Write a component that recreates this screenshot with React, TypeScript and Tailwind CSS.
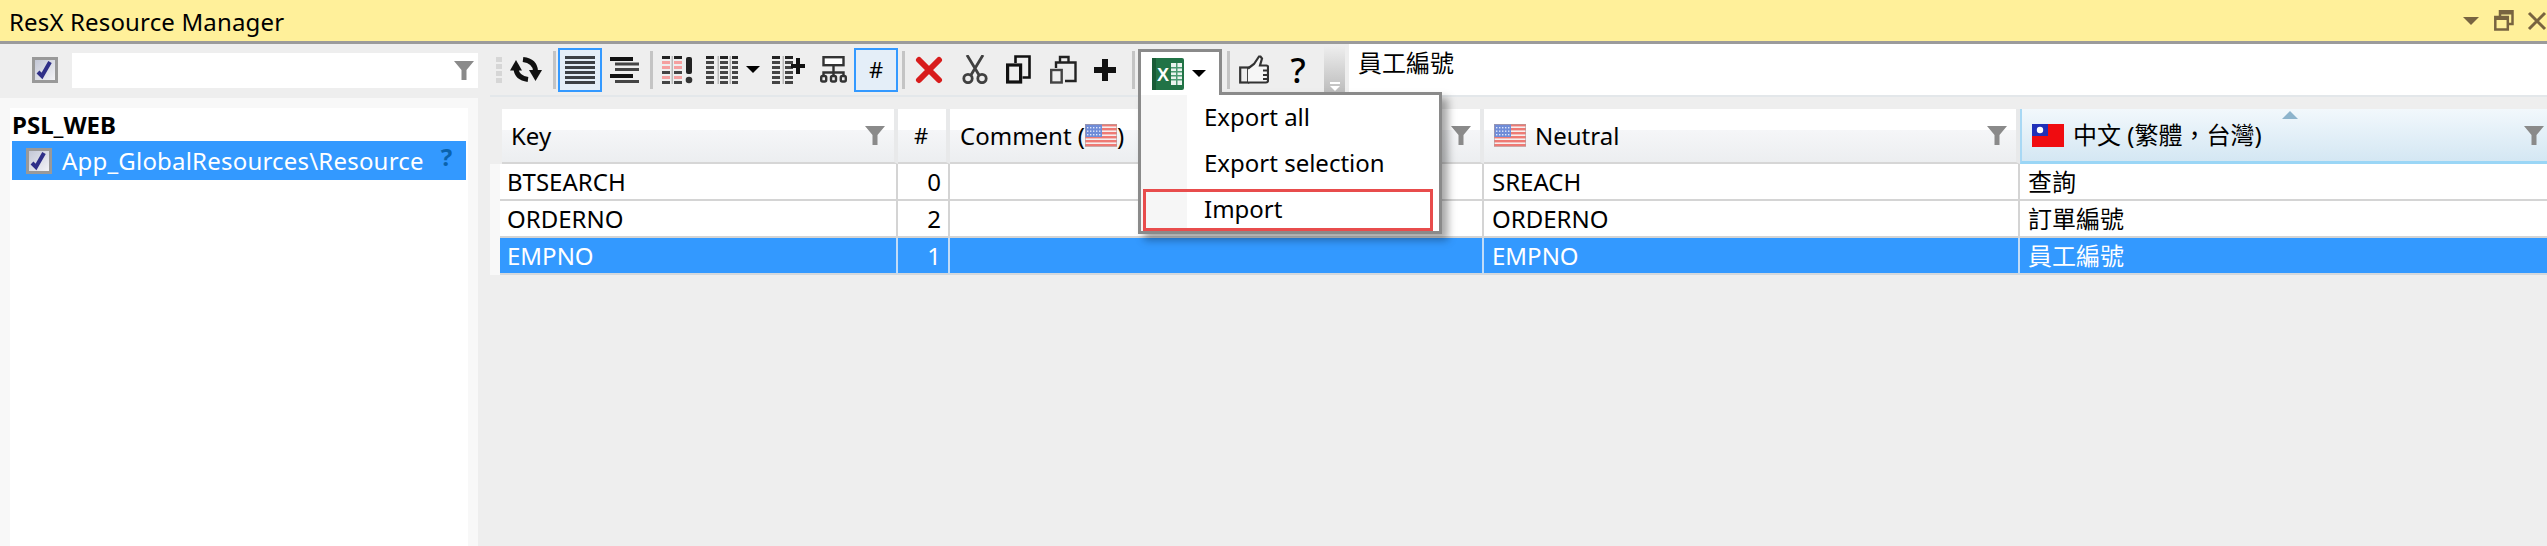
const ui = { fontFamily: '"Noto Sans", "Noto Sans CJK TC", sans-serif' };

function FilterIcon() {
  return (
    <svg width="20" height="19" viewBox="0 0 20 19" className="shrink-0">
      <path d="M0 0h20L12.5 9v10h-5V9z" fill="#8a8a8a" />
    </svg>
  );
}

function CheckBox() {
  return (
    <div className="w-[26px] h-[26px] shrink-0 border-[3px] border-[#999999] bg-gradient-to-br from-[#c3c7d6] to-[#f3f3f6]">
      <svg width="20" height="20" viewBox="0 0 20 20">
        <path d="M3 12l4 4 8-14" fill="none" stroke="#2f2f88" strokeWidth="4" />
      </svg>
    </div>
  );
}

function UsFlag() {
  return (
    <svg width="32" height="23" viewBox="0 0 32 23" className="shrink-0">
      <rect width="32" height="23" fill="#f6eeee" />
      {[0, 4, 8, 12, 16, 20].map((y) => (
        <rect key={y} y={y} width="32" height="2.4" fill="#ee7a74" />
      ))}
      <rect width="17" height="13" fill="#6f8cd8" />
      {[2, 5, 8, 11, 14].map((x) =>
        [3, 6.5, 10].map((y) => <rect key={`${x}-${y}`} x={x} y={y} width="1.4" height="1.4" fill="#dfe6fa" />),
      )}
      <rect x="0.5" y="0.5" width="31" height="22" fill="none" stroke="#b09a9a" strokeWidth="1" opacity="0.6" />
    </svg>
  );
}

function TwFlag() {
  return (
    <svg width="32" height="23" viewBox="0 0 32 23" className="shrink-0">
      <rect width="32" height="23" fill="#f00c10" />
      <rect width="16" height="12" fill="#2030b8" />
      <circle cx="8" cy="6" r="3.2" fill="#ffffff" />
    </svg>
  );
}

function Justify() {
  return (
    <svg width="30" height="28" viewBox="0 0 30 28">
      {[0, 5, 10, 15, 20, 25].map((y) => (
        <rect key={y} y={y} width="30" height="3" fill="#3c4046" />
      ))}
    </svg>
  );
}

function Centered() {
  const lines = [
    [0, 1, 23, '#111111', 4],
    [5, 6.5, 24, '#444444', 3],
    [5, 12, 24, '#444444', 3],
    [0, 18, 23, '#111111', 4],
    [5, 24, 24, '#444444', 3],
  ] as const;
  return (
    <svg width="30" height="28" viewBox="0 0 30 28">
      {lines.map(([x, y, w, fill, h], i) => (
        <rect key={i} x={x} y={y} width={w} height={h} fill={fill} />
      ))}
    </svg>
  );
}

function Stripes({ cols, pink }: { cols: number[]; pink?: boolean }) {
  const ys = [0, 5, 10, 15, 20, 25];
  return (
    <>
      {cols.map((x, c) =>
        ys.map((y, i) => (
          <rect
            key={`${c}-${i}`}
            x={x}
            y={y}
            width="8"
            height="3"
            fill={pink && (i === 1 || i === 2 || i === 4) ? '#f5a0a0' : i === 0 ? '#222222' : '#444444'}
          />
        )),
      )}
      {cols.slice(1).map((x) => (
        <rect key={x} x={x - 2.5} y="0" width="1.5" height="28" fill="#b8b8b8" />
      ))}
    </>
  );
}

function Refresh() {
  return (
    <svg width="32" height="26" viewBox="0 0 32 26">
      <path d="M6 12Q7 21 18 22.5" fill="none" stroke="#111111" strokeWidth="5" />
      <path d="M6 3L0 13.5h12z" fill="#111111" />
      <path d="M25.5 14Q25 4 13 2.5" fill="none" stroke="#111111" strokeWidth="5" />
      <path d="M25.5 24L19 13h13z" fill="#111111" />
    </svg>
  );
}

function Tree() {
  return (
    <svg width="27" height="27" viewBox="0 0 27 27" fill="none" stroke="#333333" strokeWidth="2.4">
      <rect x="3.5" y="1.2" width="20" height="8" fill="#ffffff" />
      <path d="M13.5 9v10M3.5 20v-3.5h20V20" />
      <rect x="1.2" y="20" width="5" height="5.5" rx="1.5" />
      <rect x="11" y="20" width="5" height="5.5" rx="1.5" />
      <rect x="20.8" y="20" width="5" height="5.5" rx="1.5" />
    </svg>
  );
}

function Scissors() {
  return (
    <svg width="26" height="29" viewBox="0 0 26 29" fill="none" stroke="#404040" strokeWidth="2.8">
      <path d="M5 0l12 20M21 0L9 20" />
      <circle cx="6" cy="23.5" r="4.2" />
      <circle cx="20" cy="23.5" r="4.2" />
    </svg>
  );
}

function Copy() {
  return (
    <svg width="25" height="29" viewBox="0 0 25 29" fill="none" stroke="#111111">
      <rect x="1.6" y="10" width="13" height="17" strokeWidth="3.2" />
      <path d="M9.5 8V1.5h14v21h-7" strokeWidth="2.6" />
    </svg>
  );
}

function Paste() {
  return (
    <svg width="27" height="29" viewBox="0 0 27 29" fill="none" stroke="#222222" strokeWidth="2.4">
      <rect x="1.2" y="15" width="10.5" height="12.5" stroke="#444444" />
      <path d="M6 13V7.5h19.5v18.5H15M10 7V2h8.5v5.5" />
    </svg>
  );
}

function Thumb() {
  return (
    <svg width="30" height="29" viewBox="0 0 30 29" fill="none" stroke="#333333" strokeWidth="2.2" className="ml-[9px]">
      <rect x="1.2" y="12.5" width="8" height="15" />
      <path d="M9 13.5L15 9L20 1.5h1.5L23 3.5L21 10.5H27.5Q29 10.5 29 12V25.5Q29 27.5 27 27.5H9" fill="#f6f6f6" />
      <path d="M24 15.5h5M24 20h5M24 24h5" strokeWidth="1.8" />
    </svg>
  );
}

function Excel() {
  return (
    <svg width="32" height="32" viewBox="0 0 32 32">
      <rect width="32" height="32" rx="2" fill="#217346" />
      <rect x="19" y="5" width="11" height="22" fill="#eaf3ee" />
      {[9, 13, 17, 21].map((y) => (
        <rect key={y} x="19" y={y} width="11" height="1.5" fill="#4c9a72" />
      ))}
      <rect x="24" y="5" width="1.5" height="22" fill="#4c9a72" />
      <rect y="0" width="4" height="32" fill="#185c37" />
      <text x="5" y="23" fill="#ffffff" fontSize="18" fontWeight="700" style={{ fontFamily: '"Liberation Sans", sans-serif' }}>
        X
      </text>
    </svg>
  );
}

function Sep() {
  return <div className="w-[3px] h-[38px] bg-[#c4c4c4] shrink-0" />;
}

function DropArrow() {
  return <div className="w-0 h-0 border-x-[7px] border-x-transparent border-t-[7px] border-t-black" />;
}

const headerColumns = 'grid grid-cols-[12px_396px_52px_534px_536px_1fr]';
const columns = 'grid grid-cols-[10px_398px_52px_534px_536px_1fr]';
const headerFill = 'bg-gradient-to-b from-white from-40% via-[#f5f6f8] via-40% to-[#eceef0]';

const rows = [
  { key: 'BTSEARCH', n: '0', neutral: 'SREACH', zh: '查詢' },
  { key: 'ORDERNO', n: '2', neutral: 'ORDERNO', zh: '訂單編號' },
  { key: 'EMPNO', n: '1', neutral: 'EMPNO', zh: '員工編號', selected: true },
];

function HeaderCell({ children, active }: { children: React.ReactNode; active?: boolean }) {
  return (
    <div
      className={
        active
          ? 'relative h-[55px] flex items-center pl-[10px] pr-[3px] border-l-2 border-b-[3px] border-l-[#a8d8f4] border-b-[#9ad6f6] bg-gradient-to-b from-[#f2f8fc] to-[#d4e7f3]'
          : `h-[55px] flex items-center pl-[9px] pr-[9px] border-r-[4px] border-b-2 border-r-[#e8e9ea] border-b-[#d6d6d6] ${headerFill}`
      }
    >
      {children}
      <div className="flex-1" />
      <FilterIcon />
    </div>
  );
}

export default function App() {
  return (
    <div className="w-[2547px] h-[546px] flex flex-col overflow-hidden bg-[#eeeeee] text-[24px] text-black" style={ui}>
      {/* Title bar */}
      <div className="h-[44px] shrink-0 flex items-center pl-[9px] bg-[#fff09a] border-b-[3px] border-[#9b9b9b]">
        <span className="pt-[2px] tracking-[0.15px]">ResX Resource Manager</span>
        <div className="flex-1" />
        <div className="w-0 h-0 border-x-[8px] border-x-transparent border-t-[8px] border-t-[#786440]" />
        <svg width="20" height="21" viewBox="0 0 20 21" fill="none" stroke="#786440" strokeWidth="2.5" className="ml-[15px]">
          <rect x="1.3" y="7" width="12.5" height="12.5" />
          <path d="M6 6V1.3h12.5V14H14" />
          <path d="M1.3 8.5h12.5M6 3h12.5" strokeWidth="3" />
        </svg>
        <svg width="20" height="20" viewBox="0 0 20 20" stroke="#786440" strokeWidth="3" className="ml-[13px]">
          <path d="M2 2l16 16M18 2L2 18" />
        </svg>
      </div>

      <div className="flex-1 flex min-h-0">
        {/* Left panel */}
        <div className="w-[478px] shrink-0 flex flex-col">
          <div className="h-[54px] shrink-0 flex items-center pl-[32px] pb-[2px]">
            <CheckBox />
            <div className="ml-[14px] flex-1 h-[35px] bg-white flex items-center justify-end pr-[4px]">
              <FilterIcon />
            </div>
          </div>
          <div className="flex-1 bg-[#f8f8f8] pt-[10px] pl-[10px] pr-[10px]">
            <div className="h-full bg-white pl-[2px] pr-[2px]">
              <div className="h-[33px] font-bold leading-[33px]">PSL_WEB</div>
              <div className="h-[39px] flex items-center pl-[14px] bg-[#3399ff] text-white">
                <CheckBox />
                <span className="ml-[10px] tracking-[0.2px]">App_GlobalResources\Resource</span>
                <span className="ml-[17px] mb-[8px] font-bold text-[#0a63ad]">?</span>
              </div>
            </div>
          </div>
        </div>

        {/* Right panel */}
        <div className="w-[12px] shrink-0" />
        <div className="flex-1 min-w-0 flex flex-col relative">
          <div className="h-[53px] shrink-0 flex border-b-2 border-[#e3e7ea]">
            <div className="w-[859px] shrink-0 flex items-center pl-[6px]">
              <div className="w-[6px] shrink-0 flex flex-col gap-[2px]">
                {[0, 1, 2, 3].map((i) => (
                  <div key={i} className="w-[6px] h-[5px] bg-[#d6d6d6]" />
                ))}
              </div>
              <div className="ml-[8px]"><Refresh /></div>
              <div className="ml-[11px]"><Sep /></div>
              <div className="ml-[2px] w-[44px] h-[44px] flex items-center justify-center border-2 border-[#3399ff] bg-[#e4eef8]"><Justify /></div>
              <div className="ml-[8px]"><Centered /></div>
              <div className="ml-[10px]"><Sep /></div>
              <svg width="31" height="28" viewBox="0 0 31 28" className="ml-[9px]">
                <Stripes cols={[0, 12]} pink />
                <rect x="24" y="1" width="6" height="17" rx="2" fill="#222222" />
                <circle cx="27" cy="24" r="3.3" fill="#333333" />
              </svg>
              <svg width="32" height="28" viewBox="0 0 32 28" className="ml-[13px]"><Stripes cols={[0, 14, 26]} /></svg>
              <div className="ml-[8px]"><DropArrow /></div>
              <svg width="33" height="28" viewBox="0 0 33 28" className="ml-[12px]">
                <Stripes cols={[0, 13]} />
                <path d="M24 2h4v6h5v4h-5v6h-4v-6h-5V8h5z" fill="#111111" />
              </svg>
              <div className="ml-[15px]"><Tree /></div>
              <div className="ml-[7px] w-[44px] h-[44px] flex items-center justify-center border-2 border-[#3399ff] bg-[#e4eef8] text-[22px]">#</div>
              <div className="ml-[4px]"><Sep /></div>
              <svg width="28" height="28" viewBox="0 0 28 28" className="ml-[10px]" stroke="#d81c1c" strokeWidth="6" strokeLinecap="round">
                <path d="M4 4l20 20M24 4L4 24" />
              </svg>
              <div className="ml-[19px]"><Scissors /></div>
              <div className="ml-[18px]"><Copy /></div>
              <div className="ml-[19px]"><Paste /></div>
              <svg width="22" height="22" viewBox="0 0 22 22" className="ml-[17px]"><path d="M8 0h6v8h8v6h-8v8H8v-8H0V8h8z" fill="#111111" /></svg>
              <div className="ml-[16px]"><Sep /></div>
              {/* room for the open Excel button, drawn over the toolbar below */}
              <div className="w-[92px] h-[44px] shrink-0" />
              <Sep />
              <Thumb />
              <span className="ml-[21px] w-[16px] text-center text-[34px] font-medium leading-none">?</span>
              <div className="ml-[18px] w-[21px] self-stretch mt-[2px] mb-[3px] bg-gradient-to-b from-[#eeeeee] to-[#bdbdbd] flex flex-col items-center justify-end pb-[1px]">
                <div className="w-[10px] h-[2px] bg-white" />
                <div className="mt-[2px] w-0 h-0 border-x-[5px] border-x-transparent border-t-[5px] border-t-white" />
              </div>
            </div>
            <div className="flex-1 bg-white pl-[9px] pt-[4px] leading-[30px]">員工編號</div>
          </div>

          {/* Grid */}
          <div className="mt-[12px]">
            <div className={headerColumns}>
              <div className="h-[55px]" />
              <HeaderCell>Key</HeaderCell>
              <div className={`h-[55px] flex items-center justify-center pr-[2px] border-r-[4px] border-b-2 border-r-[#e8e9ea] border-b-[#d6d6d6] text-[22px] ${headerFill}`}>#</div>
              <HeaderCell>
                <span className="ml-[1px]">Comment (</span>
                <UsFlag />
                <span>)</span>
              </HeaderCell>
              <HeaderCell>
                <span className="ml-[1px]"><UsFlag /></span>
                <span className="ml-[9px]">Neutral</span>
              </HeaderCell>
              <HeaderCell active>
                <TwFlag />
                <span className="ml-[9px]" lang="zh-TW">中文 (繁體，台灣)</span>
                <div className="absolute top-[2px] left-[260px] w-0 h-0 border-x-[8px] border-x-transparent border-b-[8px] border-b-[#8db4cc]" />
              </HeaderCell>
            </div>
            {rows.map((row) => {
              const cell = `h-[37px] border-b-2 flex items-center ${
                row.selected ? 'bg-[#3399ff] text-white border-b-[#d4d8dc]' : 'bg-white border-b-[#d4d4d4]'
              }`;
              const line = `border-r-2 ${row.selected ? 'border-r-[#c0dcf8]' : 'border-r-[#d4d4d4]'}`;
              return (
                <div key={row.key} className={columns}>
                  <div className="h-[37px] bg-[#f8f8f8]" />
                  <div className={`${cell} ${line} pl-[7px]`}>{row.key}</div>
                  <div className={`${cell} ${line} justify-end pr-[7px]`}>{row.n}</div>
                  <div className={`${cell} ${line}`} />
                  <div className={`${cell} ${line} pl-[8px]`}>{row.neutral}</div>
                  <div className={`${cell} pl-[8px]`} lang="zh-TW">{row.zh}</div>
                </div>
              );
            })}
          </div>

          {/* Excel dropdown */}
          <div className="absolute left-[648px] top-[5px] w-[84px] h-[46px] z-20 bg-white border-[3px] border-b-0 border-[#8a8a8a] flex items-center pl-[11px] gap-[8px]">
            <Excel />
            <DropArrow />
          </div>
          <div className="absolute left-[648px] top-[48px] w-[304px] h-[142px] z-10 flex flex-col bg-white border-[3px] border-[#8a8a8a] shadow-[6px_6px_8px_rgba(0,0,0,0.35)]">
            <div className="absolute left-0 top-0 bottom-0 w-[46px] bg-[#f6f6f6]" />
            <div className="relative h-[47px] shrink-0 pl-[63px] pb-[4px] flex items-center">Export all</div>
            <div className="relative h-[47px] shrink-0 pl-[63px] pb-[5px] flex items-center">Export selection</div>
            <div className="relative ml-[2px] mr-[6px] h-[42px] shrink-0 pl-[58px] pb-[3px] flex items-center border-[3px] border-[#e84c4c]">Import</div>
          </div>
        </div>
      </div>
    </div>
  );
}
